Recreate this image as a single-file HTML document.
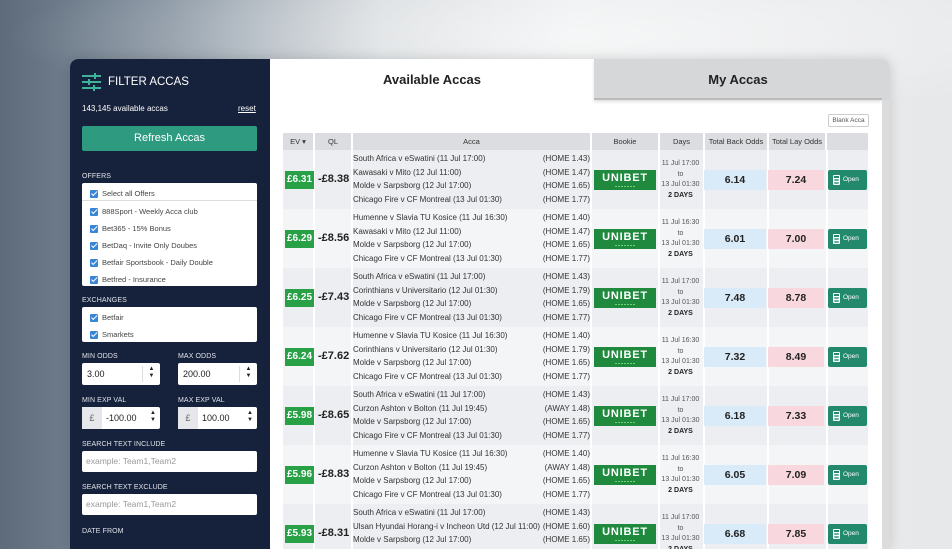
<!DOCTYPE html>
<html><head><meta charset="utf-8"><style>
*{margin:0;padding:0;box-sizing:border-box}
body{width:952px;height:536px;overflow:hidden;position:relative;font-family:"Liberation Sans",sans-serif;background:linear-gradient(90deg,#5d6b7b 0%,#8895a2 18%,#d6dadd 40%,#eceeef 60%,#e6e8ea 100%)}
.topfade{position:absolute;left:0;top:0;width:952px;height:120px;background:radial-gradient(ellipse at 60% 30%,rgba(255,255,255,.5),rgba(255,255,255,0) 70%)}
.panel{position:absolute;left:70px;top:59px;width:820px;height:490px;background:#fff;border-radius:8px 8px 0 0;overflow:hidden;box-shadow:0 0 12px rgba(0,0,0,.15)}
.side{position:absolute;left:0;top:0;width:200px;height:100%;background:#16213b;color:#fff}
.a{position:absolute}
.lbl{position:absolute;left:12px;font-size:7px;color:#dfe3ea;letter-spacing:.1px}
.inp{position:absolute;background:#fff;border-radius:2px;font-size:9px;color:#222}
.chk{position:absolute;left:8px;font-size:7.5px;color:#444;display:flex;align-items:center}
.chk i{display:inline-block;width:8px;height:8px;background:#3a86d6;border-radius:1px;margin-right:4px;position:relative}
.chk i:after{content:"";position:absolute;left:2.5px;top:.5px;width:2px;height:4.5px;border:solid #fff;border-width:0 1.2px 1.2px 0;transform:rotate(45deg)}
.tab{position:absolute;top:0;height:41px;font-size:13px;font-weight:bold;color:#222;text-align:center;line-height:41px}
.th{position:absolute;top:74px;height:17px;background:#dcdde0;font-size:7.5px;color:#333;text-align:center;line-height:17px}
.row{position:absolute;left:213px;width:585px;height:59px}
.ev{position:absolute;left:2px;top:21px;width:29px;height:18px;background:#27a046;color:#fff;font-size:10px;font-weight:bold;text-align:center;line-height:18px}
.ql{position:absolute;left:35px;top:23px;font-size:11px;font-weight:bold;color:#222}
.ac{position:absolute;left:70px;top:2px;width:237px;font-size:8px;color:#333;line-height:13.5px}
.ac div{display:flex;justify-content:space-between;white-space:nowrap}
.ub{position:absolute;left:311px;top:20px;width:62px;height:20px;background:#1f8a3e;color:#fff;font-weight:bold;font-size:11px;text-align:center;line-height:16px;letter-spacing:.8px}
.ub:after{content:"";position:absolute;left:21px;bottom:3px;width:20px;height:1.5px;background:repeating-linear-gradient(90deg,#6fd46f 0 2px,transparent 2px 3px)}
.dy{position:absolute;left:375px;top:9px;width:45px;font-size:7px;color:#555;text-align:center;line-height:10.5px}
.dy b{color:#222}
.bk{position:absolute;left:421px;top:20px;width:62px;height:20px;background:#d9ebf8;font-size:10.5px;font-weight:bold;text-align:center;line-height:20px;color:#222}
.ly{position:absolute;left:485px;top:20px;width:56px;height:20px;background:#f8d8de;font-size:10.5px;font-weight:bold;text-align:center;line-height:20px;color:#222}
.op{position:absolute;left:545px;top:20px;width:39px;height:20px;background:#23896d;border-radius:2px;color:#fff;font-size:6.5px;line-height:20px;padding-left:15px}
.op:before{content:"";position:absolute;left:5px;top:5px;width:7px;height:10px;background:#fff;border-radius:1px}
.op:after{content:"";position:absolute;left:6px;top:6px;width:5px;height:2px;background:#23896d;box-shadow:0 3px 0 -0.3px #23896d,0 6px 0 -0.3px #23896d}
.sep{position:absolute;top:0;width:2px;height:59px;background:#fff}
.o{background:#eceef1}.e{background:#f4f5f7}
</style></head><body>
<div class="topfade"></div>
<div class="panel">
 <div class="side">
  <svg class="a" style="left:12px;top:14px" width="19" height="18" viewBox="0 0 19 18"><g stroke="#3fb39a" stroke-width="2"><line x1="0" y1="3" x2="19" y2="3"/><line x1="0" y1="9" x2="19" y2="9"/><line x1="0" y1="15" x2="19" y2="15"/></g><g fill="#3fb39a"><rect x="12" y="0" width="2" height="6"/><rect x="6" y="6" width="2" height="6"/><rect x="11" y="12" width="2" height="6"/></g></svg>
  <div class="a" style="left:38px;top:17px;font-size:11.5px">FILTER ACCAS</div>
  <div class="a" style="left:12px;top:45px;font-size:8px">143,145 available accas</div>
  <div class="a" style="left:168px;top:45px;font-size:8px;text-decoration:underline">reset</div>
  <div class="a" style="left:12px;top:67px;width:175px;height:25px;background:#2e9b80;border-radius:2px;text-align:center;line-height:25px;font-size:11px">Refresh Accas</div>
  <div class="lbl" style="top:114px">OFFERS</div>
  <div class="inp" style="left:12px;top:124px;width:175px;height:103px;overflow:hidden">
   <div class="chk" style="top:6px"><i></i>Select all Offers</div>
   <div class="a" style="left:0;top:17px;width:175px;height:1px;background:#ddd"></div>
   <div class="chk" style="top:24px"><i></i>888Sport - Weekly Acca club</div>
   <div class="chk" style="top:41px"><i></i>Bet365 - 15% Bonus</div>
   <div class="chk" style="top:58px"><i></i>BetDaq - Invite Only Doubes</div>
   <div class="chk" style="top:75px"><i></i>Betfair Sportsbook - Daily Double</div>
   <div class="chk" style="top:92px"><i></i>Betfred - Insurance</div>
  </div>
  <div class="lbl" style="top:238px">EXCHANGES</div>
  <div class="inp" style="left:12px;top:248px;width:175px;height:35px">
   <div class="chk" style="top:6px"><i></i>Betfair</div>
   <div class="chk" style="top:23px"><i></i>Smarkets</div>
  </div>
  <div class="lbl" style="top:294px">MIN ODDS</div><div class="lbl" style="left:108px;top:294px">MAX ODDS</div>
  <div class="inp" style="left:12px;top:304px;width:78px;height:22px;line-height:22px;padding-left:5px">3.00<span class="a" style="right:0;top:3px;width:18px;height:16px;border-left:1px solid #ddd;font-size:6px;line-height:7px;text-align:center">▲<br>▼</span></div>
  <div class="inp" style="left:108px;top:304px;width:79px;height:22px;line-height:22px;padding-left:5px">200.00<span class="a" style="right:0;top:3px;width:18px;height:16px;border-left:1px solid #ddd;font-size:6px;line-height:7px;text-align:center">▲<br>▼</span></div>
  <div class="lbl" style="top:338px">MIN EXP VAL</div><div class="lbl" style="left:108px;top:338px">MAX EXP VAL</div>
  <div class="inp" style="left:12px;top:348px;width:78px;height:22px;line-height:22px"><span class="a" style="left:0;top:0;width:20px;height:22px;background:#e6e7ea;text-align:center;color:#666">£</span><span style="padding-left:24px">-100.00</span><span class="a" style="right:0;top:3px;width:14px;height:16px;font-size:6px;line-height:7px;text-align:center">▲<br>▼</span></div>
  <div class="inp" style="left:108px;top:348px;width:79px;height:22px;line-height:22px"><span class="a" style="left:0;top:0;width:20px;height:22px;background:#e6e7ea;text-align:center;color:#666">£</span><span style="padding-left:24px">100.00</span><span class="a" style="right:0;top:3px;width:14px;height:16px;font-size:6px;line-height:7px;text-align:center">▲<br>▼</span></div>
  <div class="lbl" style="top:382px">SEARCH TEXT INCLUDE</div>
  <div class="inp" style="left:12px;top:392px;width:175px;height:21px;line-height:21px;padding-left:4px;color:#999;font-size:8.5px">example: Team1,Team2</div>
  <div class="lbl" style="top:425px">SEARCH TEXT EXCLUDE</div>
  <div class="inp" style="left:12px;top:435px;width:175px;height:21px;line-height:21px;padding-left:4px;color:#999;font-size:8.5px">example: Team1,Team2</div>
  <div class="lbl" style="top:469px">DATE FROM</div>
 </div>
 <div class="tab" style="left:200px;width:324px;background:#fff">Available Accas</div>
 <div class="tab" style="left:524px;width:288px;background:#d6d7d9;border-bottom:2px solid #bbb;box-shadow:0 2px 3px rgba(0,0,0,.12)">My Accas</div>
 <div class="a" style="left:812px;top:0;width:8px;height:41px;background:#d6d7d9"></div>
 <div class="a" style="left:812px;top:41px;width:8px;height:460px;background:#dcdcdc"></div>
 <div class="a" style="left:758px;top:55px;width:41px;height:13px;border:1px solid #ccc;border-radius:2px;font-size:6.5px;color:#555;text-align:center;line-height:11px">Blank Acca</div>
 <div class="th" style="left:213px;width:30px">EV ▾</div>
 <div class="th" style="left:245px;width:36px">QL</div>
 <div class="th" style="left:283px;width:237px">Acca</div>
 <div class="th" style="left:522px;width:66px">Bookie</div>
 <div class="th" style="left:590px;width:43px">Days</div>
 <div class="th" style="left:635px;width:62px">Total Back Odds</div>
 <div class="th" style="left:699px;width:56px">Total Lay Odds</div>
 <div class="th" style="left:757px;width:41px"></div>

 <div class="row o" style="top:91px"><div class="sep" style="left:30px"></div><div class="sep" style="left:68px"></div><div class="sep" style="left:307px"></div><div class="sep" style="left:375px"></div><div class="sep" style="left:420px"></div><div class="sep" style="left:484px"></div><div class="sep" style="left:543px"></div>
  <div class="ev">£6.31</div><div class="ql">-£8.38</div>
  <div class="ac"><div><span>South Africa v eSwatini (11 Jul 17:00)</span><span>(HOME 1.43)</span></div><div><span>Kawasaki v Mito (12 Jul 11:00)</span><span>(HOME 1.47)</span></div><div><span>Molde v Sarpsborg (12 Jul 17:00)</span><span>(HOME 1.65)</span></div><div><span>Chicago Fire v CF Montreal (13 Jul 01:30)</span><span>(HOME 1.77)</span></div></div>
  <div class="ub">UNIBET</div><div class="dy">11 Jul 17:00<br>to<br>13 Jul 01:30<br><b>2 DAYS</b></div><div class="bk">6.14</div><div class="ly">7.24</div><div class="op">Open</div></div>

 <div class="row e" style="top:150px"><div class="sep" style="left:30px"></div><div class="sep" style="left:68px"></div><div class="sep" style="left:307px"></div><div class="sep" style="left:375px"></div><div class="sep" style="left:420px"></div><div class="sep" style="left:484px"></div><div class="sep" style="left:543px"></div>
  <div class="ev">£6.29</div><div class="ql">-£8.56</div>
  <div class="ac"><div><span>Humenne v Slavia TU Kosice (11 Jul 16:30)</span><span>(HOME 1.40)</span></div><div><span>Kawasaki v Mito (12 Jul 11:00)</span><span>(HOME 1.47)</span></div><div><span>Molde v Sarpsborg (12 Jul 17:00)</span><span>(HOME 1.65)</span></div><div><span>Chicago Fire v CF Montreal (13 Jul 01:30)</span><span>(HOME 1.77)</span></div></div>
  <div class="ub">UNIBET</div><div class="dy">11 Jul 16:30<br>to<br>13 Jul 01:30<br><b>2 DAYS</b></div><div class="bk">6.01</div><div class="ly">7.00</div><div class="op">Open</div></div>

 <div class="row o" style="top:209px"><div class="sep" style="left:30px"></div><div class="sep" style="left:68px"></div><div class="sep" style="left:307px"></div><div class="sep" style="left:375px"></div><div class="sep" style="left:420px"></div><div class="sep" style="left:484px"></div><div class="sep" style="left:543px"></div>
  <div class="ev">£6.25</div><div class="ql">-£7.43</div>
  <div class="ac"><div><span>South Africa v eSwatini (11 Jul 17:00)</span><span>(HOME 1.43)</span></div><div><span>Corinthians v Universitario (12 Jul 01:30)</span><span>(HOME 1.79)</span></div><div><span>Molde v Sarpsborg (12 Jul 17:00)</span><span>(HOME 1.65)</span></div><div><span>Chicago Fire v CF Montreal (13 Jul 01:30)</span><span>(HOME 1.77)</span></div></div>
  <div class="ub">UNIBET</div><div class="dy">11 Jul 17:00<br>to<br>13 Jul 01:30<br><b>2 DAYS</b></div><div class="bk">7.48</div><div class="ly">8.78</div><div class="op">Open</div></div>

 <div class="row e" style="top:268px"><div class="sep" style="left:30px"></div><div class="sep" style="left:68px"></div><div class="sep" style="left:307px"></div><div class="sep" style="left:375px"></div><div class="sep" style="left:420px"></div><div class="sep" style="left:484px"></div><div class="sep" style="left:543px"></div>
  <div class="ev">£6.24</div><div class="ql">-£7.62</div>
  <div class="ac"><div><span>Humenne v Slavia TU Kosice (11 Jul 16:30)</span><span>(HOME 1.40)</span></div><div><span>Corinthians v Universitario (12 Jul 01:30)</span><span>(HOME 1.79)</span></div><div><span>Molde v Sarpsborg (12 Jul 17:00)</span><span>(HOME 1.65)</span></div><div><span>Chicago Fire v CF Montreal (13 Jul 01:30)</span><span>(HOME 1.77)</span></div></div>
  <div class="ub">UNIBET</div><div class="dy">11 Jul 16:30<br>to<br>13 Jul 01:30<br><b>2 DAYS</b></div><div class="bk">7.32</div><div class="ly">8.49</div><div class="op">Open</div></div>

 <div class="row o" style="top:327px"><div class="sep" style="left:30px"></div><div class="sep" style="left:68px"></div><div class="sep" style="left:307px"></div><div class="sep" style="left:375px"></div><div class="sep" style="left:420px"></div><div class="sep" style="left:484px"></div><div class="sep" style="left:543px"></div>
  <div class="ev">£5.98</div><div class="ql">-£8.65</div>
  <div class="ac"><div><span>South Africa v eSwatini (11 Jul 17:00)</span><span>(HOME 1.43)</span></div><div><span>Curzon Ashton v Bolton (11 Jul 19:45)</span><span>(AWAY 1.48)</span></div><div><span>Molde v Sarpsborg (12 Jul 17:00)</span><span>(HOME 1.65)</span></div><div><span>Chicago Fire v CF Montreal (13 Jul 01:30)</span><span>(HOME 1.77)</span></div></div>
  <div class="ub">UNIBET</div><div class="dy">11 Jul 17:00<br>to<br>13 Jul 01:30<br><b>2 DAYS</b></div><div class="bk">6.18</div><div class="ly">7.33</div><div class="op">Open</div></div>

 <div class="row e" style="top:386px"><div class="sep" style="left:30px"></div><div class="sep" style="left:68px"></div><div class="sep" style="left:307px"></div><div class="sep" style="left:375px"></div><div class="sep" style="left:420px"></div><div class="sep" style="left:484px"></div><div class="sep" style="left:543px"></div>
  <div class="ev">£5.96</div><div class="ql">-£8.83</div>
  <div class="ac"><div><span>Humenne v Slavia TU Kosice (11 Jul 16:30)</span><span>(HOME 1.40)</span></div><div><span>Curzon Ashton v Bolton (11 Jul 19:45)</span><span>(AWAY 1.48)</span></div><div><span>Molde v Sarpsborg (12 Jul 17:00)</span><span>(HOME 1.65)</span></div><div><span>Chicago Fire v CF Montreal (13 Jul 01:30)</span><span>(HOME 1.77)</span></div></div>
  <div class="ub">UNIBET</div><div class="dy">11 Jul 16:30<br>to<br>13 Jul 01:30<br><b>2 DAYS</b></div><div class="bk">6.05</div><div class="ly">7.09</div><div class="op">Open</div></div>

 <div class="row o" style="top:445px"><div class="sep" style="left:30px"></div><div class="sep" style="left:68px"></div><div class="sep" style="left:307px"></div><div class="sep" style="left:375px"></div><div class="sep" style="left:420px"></div><div class="sep" style="left:484px"></div><div class="sep" style="left:543px"></div>
  <div class="ev">£5.93</div><div class="ql">-£8.31</div>
  <div class="ac"><div><span>South Africa v eSwatini (11 Jul 17:00)</span><span>(HOME 1.43)</span></div><div><span>Ulsan Hyundai Horang-i v Incheon Utd (12 Jul 11:00)</span><span>(HOME 1.60)</span></div><div><span>Molde v Sarpsborg (12 Jul 17:00)</span><span>(HOME 1.65)</span></div><div><span>Chicago Fire v CF Montreal (13 Jul 01:30)</span><span>(HOME 1.77)</span></div></div>
  <div class="ub">UNIBET</div><div class="dy">11 Jul 17:00<br>to<br>13 Jul 01:30<br><b>2 DAYS</b></div><div class="bk">6.68</div><div class="ly">7.85</div><div class="op">Open</div></div>
 </div>
</body></html>
